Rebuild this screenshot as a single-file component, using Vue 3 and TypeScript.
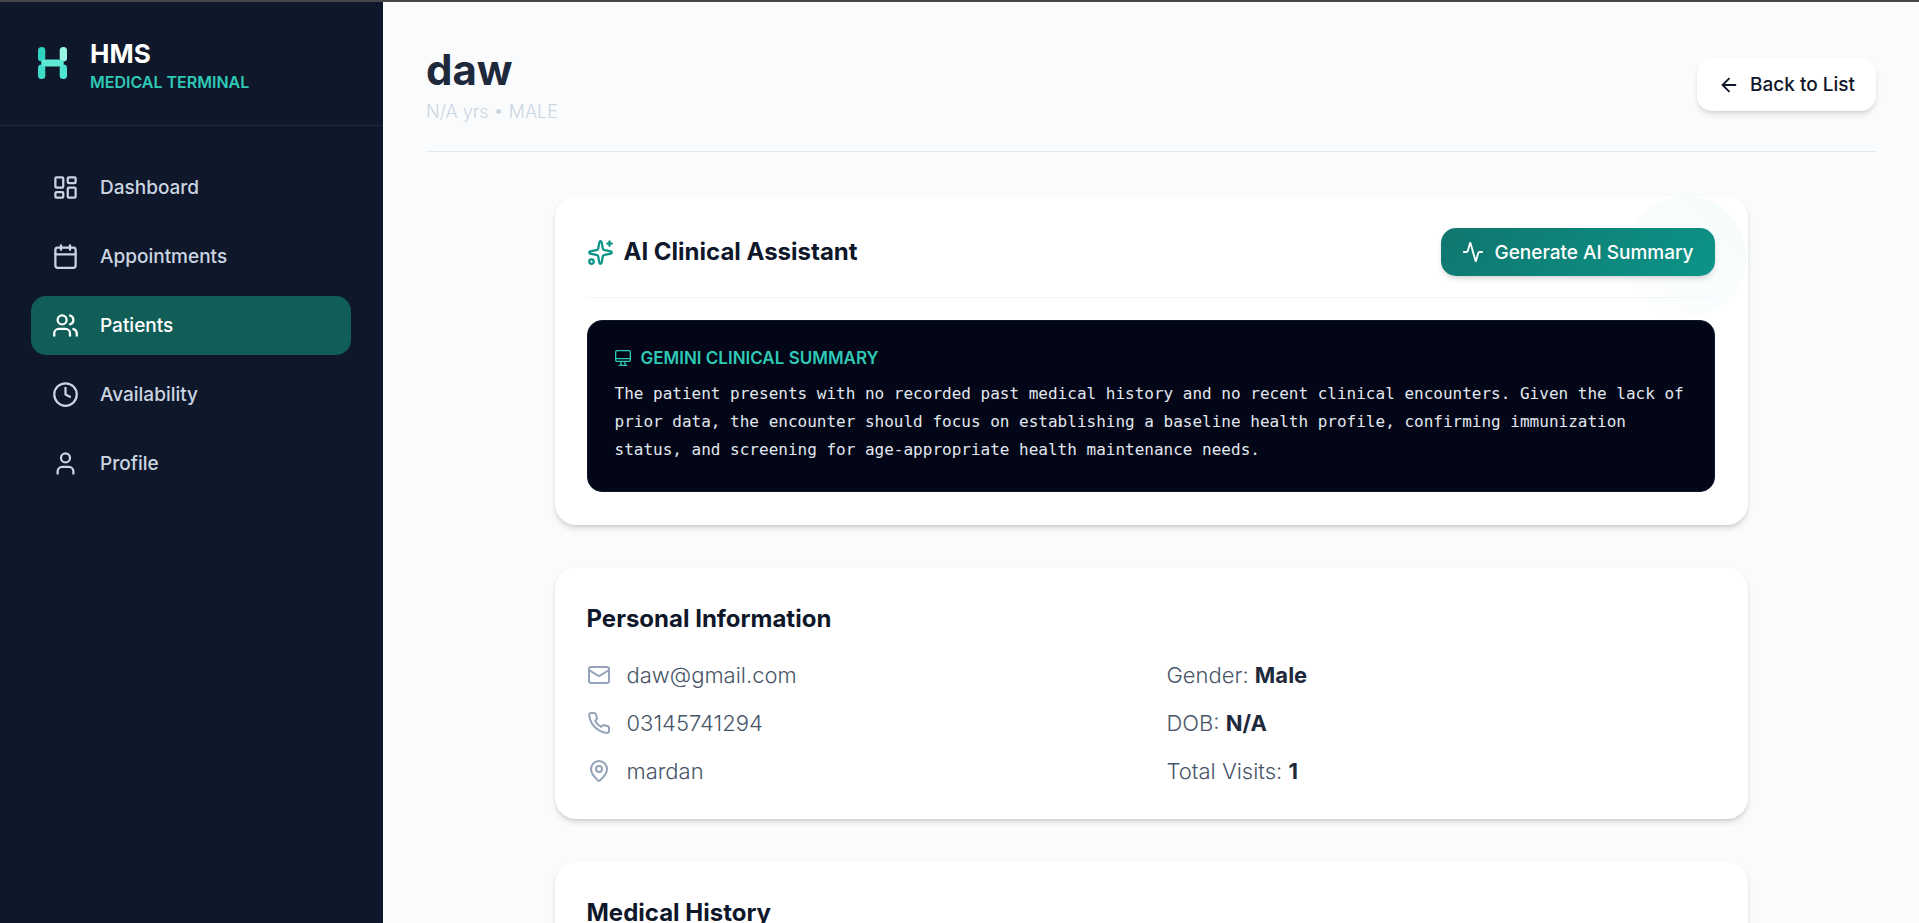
<script setup lang="ts">
import { ref } from 'vue'

interface NavItem {
  label: string
  paths: string[]
}

const navItems: NavItem[] = [
  {
    label: 'Dashboard',
    paths: [
      'M4 3h5a1 1 0 0 1 1 1v7a1 1 0 0 1-1 1H4a1 1 0 0 1-1-1V4a1 1 0 0 1 1-1z',
      'M15 3h5a1 1 0 0 1 1 1v3a1 1 0 0 1-1 1h-5a1 1 0 0 1-1-1V4a1 1 0 0 1 1-1z',
      'M15 12h5a1 1 0 0 1 1 1v7a1 1 0 0 1-1 1h-5a1 1 0 0 1-1-1v-7a1 1 0 0 1 1-1z',
      'M4 16h5a1 1 0 0 1 1 1v3a1 1 0 0 1-1 1H4a1 1 0 0 1-1-1v-3a1 1 0 0 1 1-1z',
    ],
  },
  {
    label: 'Appointments',
    paths: [
      'M8 2v4',
      'M16 2v4',
      'M5 4h14a2 2 0 0 1 2 2v14a2 2 0 0 1-2 2H5a2 2 0 0 1-2-2V6a2 2 0 0 1 2-2z',
      'M3 10h18',
    ],
  },
  {
    label: 'Patients',
    paths: [
      'M16 21v-2a4 4 0 0 0-4-4H6a4 4 0 0 0-4 4v2',
      'M9 3a4 4 0 1 0 0 8a4 4 0 1 0 0-8z',
      'M22 21v-2a4 4 0 0 0-3-3.87',
      'M16 3.13a4 4 0 0 1 0 7.75',
    ],
  },
  {
    label: 'Availability',
    paths: ['M12 2a10 10 0 1 0 0 20a10 10 0 1 0 0-20z', 'M12 6v6l4 2'],
  },
  {
    label: 'Profile',
    paths: [
      'M19 21v-2a4 4 0 0 0-4-4H9a4 4 0 0 0-4 4v2',
      'M12 3a4 4 0 1 0 0 8a4 4 0 1 0 0-8z',
    ],
  },
]

const active = ref('Patients')

const contacts = [
  {
    value: 'daw@gmail.com',
    paths: [
      'M4 4h16a2 2 0 0 1 2 2v12a2 2 0 0 1-2 2H4a2 2 0 0 1-2-2V6a2 2 0 0 1 2-2z',
      'm22 7-8.97 5.7a1.94 1.94 0 0 1-2.06 0L2 7',
    ],
  },
  {
    value: '03145741294',
    paths: [
      'M22 16.92v3a2 2 0 0 1-2.18 2 19.79 19.79 0 0 1-8.63-3.07 19.5 19.5 0 0 1-6-6 19.79 19.79 0 0 1-3.07-8.67A2 2 0 0 1 4.11 2h3a2 2 0 0 1 2 1.72 12.84 12.84 0 0 0 .7 2.81 2 2 0 0 1-.45 2.11L8.09 9.91a16 16 0 0 0 6 6l1.27-1.27a2 2 0 0 1 2.11-.45 12.84 12.84 0 0 0 2.81.7A2 2 0 0 1 22 16.92z',
    ],
  },
  {
    value: 'mardan',
    paths: [
      'M20 10c0 4.993-5.539 10.193-7.399 11.799a1 1 0 0 1-1.202 0C9.539 20.193 4 14.993 4 10a8 8 0 0 1 16 0',
      'M12 7a3 3 0 1 0 0 6a3 3 0 1 0 0-6z',
    ],
  },
]

const facts = [
  { term: 'Gender:', value: 'Male' },
  { term: 'DOB:', value: 'N/A' },
  { term: 'Total Visits:', value: '1' },
]
</script>

<template>
  <div class="shell">
    <aside class="sidebar">
      <div class="brand">
        <svg class="logo" viewBox="0 0 32 34" aria-hidden="true">
          <rect x="1" y="1" width="7.3" height="14.5" rx="3.5" fill="#2dd4bf" />
          <rect x="1" y="18.5" width="7.3" height="14.5" rx="3.5" fill="#3fdcc8" />
          <rect x="22.7" y="1" width="7.3" height="14.5" rx="3.5" fill="#99f6e4" />
          <rect x="22.7" y="18.5" width="7.3" height="14.5" rx="3.5" fill="#50e5d0" />
          <rect x="4.2" y="13.6" width="22.6" height="7" rx="3.5" fill="#5eead4" />
        </svg>
        <div class="brand-text">
          <div class="brand-name">HMS</div>
          <div class="brand-sub">MEDICAL TERMINAL</div>
        </div>
      </div>
      <nav class="nav" aria-label="Main">
        <a
          v-for="item in navItems"
          :key="item.label"
          href="#"
          class="nav-link"
          :class="{ active: item.label === active }"
          @click.prevent="active = item.label"
        >
          <svg class="icon nav-icon" viewBox="0 0 24 24" aria-hidden="true">
            <path v-for="d in item.paths" :key="d" :d="d" />
          </svg>
          <span>{{ item.label }}</span>
        </a>
      </nav>
    </aside>

    <main class="main">
      <header class="page-head">
        <div>
          <h1>daw</h1>
          <p class="sub">N/A yrs • MALE</p>
        </div>
        <button type="button" class="back">
          <svg class="icon small-icon" viewBox="0 0 24 24" aria-hidden="true">
            <path d="m12 19-7-7 7-7" />
            <path d="M19 12H5" />
          </svg>
          Back to List
        </button>
      </header>

      <div class="cards">
        <section class="card assistant">
          <div class="glow"></div>
          <div class="assistant-head">
            <h2>
              <svg class="icon spark" viewBox="0 0 24 24" aria-hidden="true">
                <path
                  d="M11.017 2.814a1 1 0 0 1 1.966 0l1.051 5.558a2 2 0 0 0 1.594 1.594l5.558 1.051a1 1 0 0 1 0 1.966l-5.558 1.051a2 2 0 0 0-1.594 1.594l-1.051 5.558a1 1 0 0 1-1.966 0l-1.051-5.558a2 2 0 0 0-1.594-1.594l-5.558-1.051a1 1 0 0 1 0-1.966l5.558-1.051a2 2 0 0 0 1.594-1.594z"
                />
                <path d="M20 2v4" />
                <path d="M22 4h-4" />
                <circle cx="4" cy="20" r="2" />
              </svg>
              AI Clinical Assistant
            </h2>
            <button type="button" class="generate">
              <svg class="icon small-icon" viewBox="0 0 24 24" aria-hidden="true">
                <path
                  d="M22 12h-2.48a2 2 0 0 0-1.93 1.46l-2.35 8.36a.25.25 0 0 1-.48 0L9.24 2.18a.25.25 0 0 0-.48 0l-2.35 8.36A2 2 0 0 1 4.49 12H2"
                />
              </svg>
              Generate AI Summary
            </button>
          </div>
          <div class="summary">
            <h3>
              <svg class="icon monitor" viewBox="0 0 24 24" aria-hidden="true">
                <rect x="1" y="1" width="22" height="16" rx="2" />
                <path d="M1 13h22M9 17v5M15 17v5M6 23h12" />
              </svg>
              GEMINI CLINICAL SUMMARY
            </h3>
            <p>
              The patient presents with no recorded past medical history and no recent clinical
              encounters. Given the lack of prior data, the encounter should focus on establishing a
              baseline health profile, confirming immunization status, and screening for
              age-appropriate health maintenance needs.
            </p>
          </div>
        </section>

        <section class="card">
          <h2>Personal Information</h2>
          <div class="info">
            <ul>
              <li v-for="contact in contacts" :key="contact.value">
                <svg class="icon info-icon" viewBox="0 0 24 24" aria-hidden="true">
                  <path v-for="d in contact.paths" :key="d" :d="d" />
                </svg>
                {{ contact.value }}
              </li>
            </ul>
            <ul>
              <li v-for="fact in facts" :key="fact.term">
                <span>{{ fact.term }} <strong>{{ fact.value }}</strong></span>
              </li>
            </ul>
          </div>
        </section>

        <section class="card">
          <h2>Medical History</h2>
        </section>
      </div>
    </main>
  </div>
</template>

<style>
body {
  margin: 0;
  background: #fafbfd;
}
</style>

<style scoped>
.shell {
  box-sizing: border-box;
  display: flex;
  height: 100vh;
  overflow: hidden;
  border-top: 2px solid #464849;
  background: #fafbfd;
  color: #0f172a;
  font-family: Inter, 'Noto Sans', sans-serif;
}

.icon {
  flex: none;
  fill: none;
  stroke: currentColor;
  stroke-width: 2;
  stroke-linecap: round;
  stroke-linejoin: round;
}

.sidebar {
  box-sizing: border-box;
  flex: none;
  width: 383px;
  background: #0f172a;
}

.brand {
  display: flex;
  align-items: flex-start;
  gap: 21px;
  padding: 38px 37px 31px;
  border-bottom: 1px solid #1e293b;
}

.logo {
  flex: none;
  width: 32px;
  height: 46px;
}

.brand-text {
  display: grid;
  gap: 2px;
}

.brand-name {
  color: #fff;
  font-size: 26px;
  font-weight: 700;
  line-height: 28px;
}

.brand-sub {
  color: #2fc9b6;
  font-size: 16px;
  font-weight: 600;
  line-height: 24px;
}

.nav {
  display: grid;
  gap: 10px;
  padding: 32px 32px 32px 31px;
}

.nav-link {
  display: flex;
  align-items: center;
  gap: 21px;
  height: 59px;
  padding: 0 21px;
  border-radius: 15px;
  color: #cbd5e1;
  font-size: 19px;
  font-weight: 500;
  text-decoration: none;
}

.nav-link.active {
  background: #115e59;
  color: #fff;
}

.nav-icon {
  width: 27px;
  height: 27px;
}

.main {
  flex: 1;
  min-width: 0;
  overflow-y: auto;
  scrollbar-width: none;
  padding: 41px 43px 43px;
}

.page-head {
  display: flex;
  align-items: center;
  justify-content: space-between;
  padding-bottom: 25px;
  border-bottom: 1px solid #e2e8f0;
}

h1 {
  margin: 0;
  color: #1e293b;
  font-size: 42px;
  font-weight: 700;
  line-height: 54px;
}

.sub {
  margin: 0;
  color: #cbd5e1;
  font-size: 18px;
  font-weight: 300;
  line-height: 29px;
}

button {
  display: flex;
  align-items: center;
  gap: 10px;
  border: 0;
  border-radius: 15px;
  font-family: inherit;
  font-size: 19px;
  font-weight: 500;
  cursor: pointer;
}

.small-icon {
  width: 22px;
  height: 22px;
}

.back {
  height: 53px;
  padding: 0 21px;
  background: #fff;
  color: #0f172a;
  box-shadow: 0 4px 6px -1px rgb(0 0 0 / 12%), 0 2px 4px -2px rgb(0 0 0 / 12%);
}

.cards {
  display: grid;
  gap: 43px;
  max-width: 1193px;
  margin: 44px auto 0;
}

.card {
  position: relative;
  overflow: hidden;
  padding: 33px 33px 33px 32px;
  border-radius: 21px;
  background: #fff;
  box-shadow: 0 4px 6px -1px rgb(0 0 0 / 14%), 0 2px 4px -2px rgb(0 0 0 / 14%);
}

.assistant {
  padding-top: 32px;
}

.glow {
  position: absolute;
  top: 0;
  right: 2px;
  width: 122px;
  height: 122px;
  border-radius: 50%;
  background: linear-gradient(225deg, #f4fbfb, #fff);
}

h2 {
  display: flex;
  align-items: center;
  gap: 10px;
  margin: 0;
  font-size: 24px;
  font-weight: 700;
  line-height: 36px;
}

.assistant-head {
  position: relative;
  display: flex;
  align-items: center;
  justify-content: space-between;
  padding-bottom: 21px;
  border-bottom: 1px solid #f1f5f9;
}

.spark {
  width: 27px;
  height: 27px;
  color: #0d9488;
}

.generate {
  height: 48px;
  padding: 0 21px;
  background: linear-gradient(135deg, #0f766e, #0d9488);
  color: #fff;
  box-shadow: 0 4px 6px -1px rgb(0 0 0 / 12%), 0 2px 4px -2px rgb(0 0 0 / 12%);
}

.summary {
  position: relative;
  margin-top: 22px;
  padding: 25px 27px 27px;
  border: 1px solid #0f172a;
  border-radius: 15px;
  background: #020617;
}

.summary h3 {
  display: flex;
  align-items: center;
  gap: 10px;
  margin: 0 0 10px;
  color: #2fc9b6;
  font-size: 17px;
  font-weight: 600;
  line-height: 24px;
}

.monitor {
  width: 16px;
  height: 16px;
}

.summary p {
  margin: 0;
  color: #e2e8f0;
  font-family: 'DejaVu Sans Mono', monospace;
  font-size: 16px;
  line-height: 28px;
}

.info {
  display: grid;
  grid-template-columns: 1fr 1fr;
  gap: 32px;
  margin-top: 23px;
}

ul {
  display: grid;
  gap: 18px;
  margin: 0;
  padding: 0;
  list-style: none;
}

li {
  display: flex;
  align-items: center;
  gap: 16px;
  color: #475569;
  font-size: 22px;
  font-weight: 300;
  line-height: 30px;
}

.info-icon {
  width: 24px;
  height: 24px;
  color: #94a3b8;
}

strong {
  color: #1e293b;
  font-weight: 700;
}
</style>
